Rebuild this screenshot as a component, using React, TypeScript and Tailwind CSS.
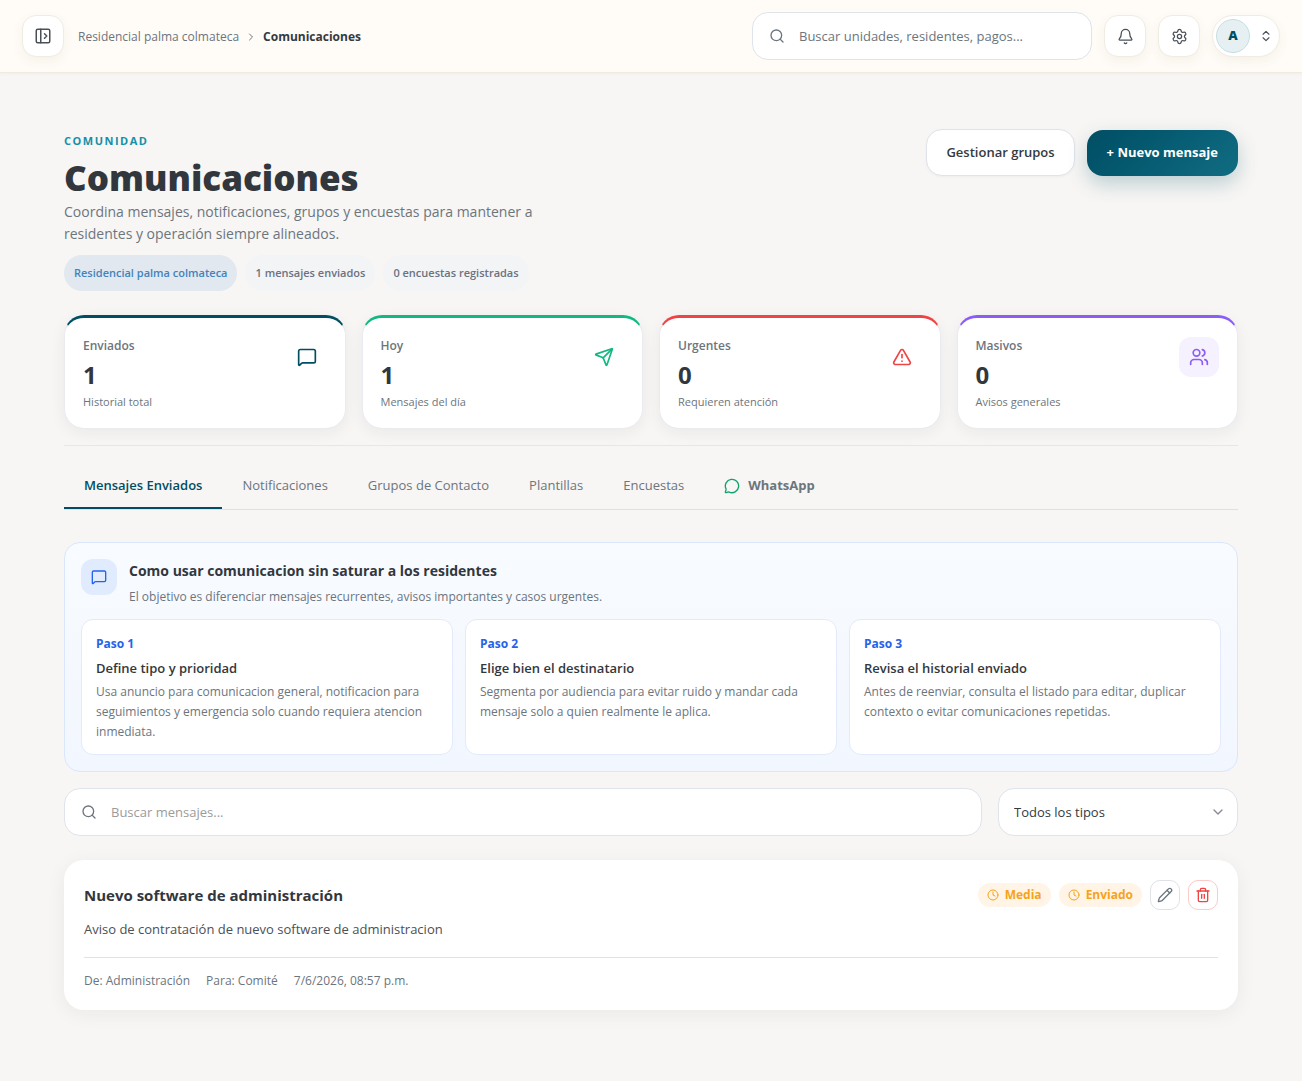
import React, { useState } from "react";
import {
	Bell,
	ChevronDown,
	ChevronRight,
	ChevronsUpDown,
	Clock,
	MessageCircle,
	MessageSquare,
	PanelLeftOpen,
	Pencil,
	Search,
	Send,
	Settings,
	Trash2,
	TriangleAlert,
	Users,
} from "lucide-react";
import cx from "clsx";

const STATS = [
	{
		label: "Enviados",
		value: 1,
		hint: "Historial total",
		icon: MessageSquare,
		border: "border-t-[#004e64]",
		iconStyle: "text-[#004e64]",
	},
	{
		label: "Hoy",
		value: 1,
		hint: "Mensajes del día",
		icon: Send,
		border: "border-t-[#10b981]",
		iconStyle: "text-[#10b981]",
	},
	{
		label: "Urgentes",
		value: 0,
		hint: "Requieren atención",
		icon: TriangleAlert,
		border: "border-t-[#ef4444]",
		iconStyle: "text-[#ef4444]",
	},
	{
		label: "Masivos",
		value: 0,
		hint: "Avisos generales",
		icon: Users,
		border: "border-t-[#8b5cf6]",
		iconStyle: "text-[#8b5cf6] bg-[#f5f1fe]",
	},
];

const TABS = ["Mensajes Enviados", "Notificaciones", "Grupos de Contacto", "Plantillas", "Encuestas"];

const STEPS = [
	{
		step: "Paso 1",
		title: "Define tipo y prioridad",
		text: "Usa anuncio para comunicacion general, notificacion para seguimientos y emergencia solo cuando requiera atencion inmediata.",
	},
	{
		step: "Paso 2",
		title: "Elige bien el destinatario",
		text: "Segmenta por audiencia para evitar ruido y mandar cada mensaje solo a quien realmente le aplica.",
	},
	{
		step: "Paso 3",
		title: "Revisa el historial enviado",
		text: "Antes de reenviar, consulta el listado para editar, duplicar contexto o evitar comunicaciones repetidas.",
	},
];

const headerButton =
	"flex items-center h-[42px] border border-[#f0ece3] bg-white text-[#495057] shadow-[0_4px_12px_rgba(80,60,20,0.06)]";
const iconButton = cx(headerButton, "justify-center w-[42px] rounded-[14px]");

const Header: React.FC = () => (
	<header className="flex items-center justify-between gap-4 h-[73px] px-[22px] bg-[#fffcf7] border-b border-[#f0ebe1] shadow-[0_1px_3px_rgba(80,60,20,0.04)]">
		<div className="flex items-center gap-3.5">
			<button type="button" aria-label="Abrir menú" className={iconButton}>
				<PanelLeftOpen size={18} />
			</button>
			<nav aria-label="Ruta" className="flex items-center gap-1.5 pt-px text-xs">
				<a href="#residencial" className="text-[#6c757d]">
					Residencial palma colmateca
				</a>
				<ChevronRight size={12} className="text-[#6c757d]" />
				<span className="font-bold text-[#343a40]">Comunicaciones</span>
			</nav>
		</div>
		<div className="flex items-center gap-3">
			<label className="flex items-center gap-3.5 w-[340px] h-12 px-4 rounded-2xl border border-[#dfe3ea] bg-white">
				<Search size={16} className="shrink-0 text-[#6c757d]" />
				<input
					type="search"
					aria-label="Buscar"
					placeholder="Buscar unidades, residentes, pagos..."
					className="w-full pt-0.5 text-[13px] outline-none placeholder:text-[#6c757d]"
				/>
			</label>
			<button type="button" aria-label="Notificaciones" className={iconButton}>
				<Bell size={17} strokeWidth={1.8} />
			</button>
			<button type="button" aria-label="Configuración" className={iconButton}>
				<Settings size={17} strokeWidth={1.8} />
			</button>
			<button
				type="button"
				aria-label="Cuenta"
				className={cx(headerButton, "justify-between w-[68px] pl-[3px] pr-1.5 rounded-full")}
			>
				<span className="flex items-center justify-center size-[34px] rounded-full border border-[#c5dfe4] bg-[#e6f0f3] text-[13px] font-extrabold text-[#004e64]">
					A
				</span>
				<ChevronsUpDown size={14} />
			</button>
		</div>
	</header>
);

const PageTitle: React.FC = () => (
	<div className="flex items-start justify-between gap-6">
		<div className="pt-1">
			<p className="text-[11px] leading-4 font-bold tracking-[1.5px] text-[#1590a8]">COMUNIDAD</p>
			<h1 className="mt-2 text-[35px] leading-[42px] font-extrabold text-[#32373d]">Comunicaciones</h1>
			<p className="mt-0.5 max-w-[480px] text-sm leading-[22px] text-[#6c757d]">
				Coordina mensajes, notificaciones, grupos y encuestas para mantener a residentes y operación siempre alineados.
			</p>
			<div className="flex gap-2 mt-2.5 text-[11px] font-semibold text-[#6b7280]">
				<span className="flex items-center h-9 px-2.5 rounded-full bg-[#e1e8f0] text-[#4383bb]">
					Residencial palma colmateca
				</span>
				<span className="flex items-center h-9 px-2.5 rounded-full bg-[#f3f4f6]">1 mensajes enviados</span>
				<span className="flex items-center h-9 px-2.5 rounded-full bg-[#f3f4f6]">0 encuestas registradas</span>
			</div>
		</div>
		<div className="flex items-end gap-3 text-[13px]">
			<button
				type="button"
				className="h-[47px] px-[19px] rounded-2xl border border-[#dfe3ea] bg-white font-semibold text-[#343a40] shadow-[0_1px_3px_rgba(0,0,0,0.04)]"
			>
				Gestionar grupos
			</button>
			<button
				type="button"
				className="h-[46px] px-5 rounded-2xl bg-linear-135 from-[#004e64] to-[#106c82] font-bold text-white shadow-[0_8px_20px_rgba(0,78,100,0.24)]"
			>
				+ Nuevo mensaje
			</button>
		</div>
	</div>
);

const Stats: React.FC = () => (
	<div className="grid grid-cols-4 gap-4 mt-6">
		{STATS.map(({ label, value, hint, icon: Icon, border, iconStyle }) => (
			<div
				key={label}
				className={cx(
					"flex items-start justify-between px-[18px] pt-[18px] pb-4",
					"rounded-[20px] border border-t-3 border-[#e9ebf0] bg-white shadow-[0_4px_16px_rgba(60,40,20,0.06)]",
					border,
				)}
			>
				<div>
					<p className="text-xs leading-5 font-semibold text-[#6c757d]">{label}</p>
					<p className="mt-1 text-2xl leading-[30px] font-bold text-[#32373d]">{value}</p>
					<p className="mt-0.5 text-[11px] leading-5 text-[#6c757d]">{hint}</p>
				</div>
				<span className={cx("flex items-center justify-center mt-px size-10 rounded-xl", iconStyle)}>
					<Icon size={20} />
				</span>
			</div>
		))}
	</div>
);

const Tabs: React.FC = () => {
	const [active, setActive] = useState(TABS[0]);

	return (
		<div role="tablist" className="flex mt-4 border-b border-[#dee0e3] text-[13px] text-[#6c757d]">
			{TABS.map((tab) => (
				<button
					key={tab}
					type="button"
					role="tab"
					aria-selected={tab === active}
					onClick={() => setActive(tab)}
					className={cx(
						"h-[47px] px-5 pt-0.5 border-b-2",
						tab === active ? "border-[#004e64] font-semibold text-[#004e64]" : "border-transparent",
					)}
				>
					{tab}
				</button>
			))}
			<button
				type="button"
				role="tab"
				aria-selected={active === "WhatsApp"}
				onClick={() => setActive("WhatsApp")}
				className="flex items-center gap-2 h-[47px] px-5 pt-0.5 border-b-2 border-transparent font-bold"
			>
				<MessageCircle size={16} className="text-[#0fa36b]" />
				WhatsApp
			</button>
		</div>
	);
};

const Guide: React.FC = () => (
	<section className="mt-8 p-4 rounded-2xl border border-[#d9e7fd] bg-linear-to-b from-[#f8fbff] to-[#f2f6fe]">
		<div className="flex gap-3">
			<span className="flex items-center justify-center size-9 rounded-xl bg-[#e0ebfe] text-[#2563eb]">
				<MessageSquare size={16} />
			</span>
			<div>
				<h2 className="text-sm leading-6 font-bold text-[#32373d]">Como usar comunicacion sin saturar a los residentes</h2>
				<p className="mt-1 text-xs leading-5 text-[#6c757d]">
					El objetivo es diferenciar mensajes recurrentes, avisos importantes y casos urgentes.
				</p>
			</div>
		</div>
		<div className="grid grid-cols-3 gap-3 mt-3">
			{STEPS.map(({ step, title, text }) => (
				<div key={step} className="px-3.5 pt-3.5 pb-3 rounded-xl border border-[#e2eafb] bg-white">
					<p className="text-xs leading-5 font-bold text-[#2563eb]">{step}</p>
					<h3 className="mt-1 text-[13px] leading-5 font-semibold text-[#32373d]">{title}</h3>
					<p className="mt-1 text-xs leading-5 text-[#6c757d]">{text}</p>
				</div>
			))}
		</div>
	</section>
);

const Filters: React.FC = () => (
	<div className="flex gap-4 mt-4 text-[13px]">
		<label className="flex flex-1 items-center gap-3.5 h-12 px-4 rounded-2xl border border-[#dfe3ea] bg-white">
			<Search size={16} className="shrink-0 text-[#6c757d]" />
			<input
				type="search"
				aria-label="Buscar mensajes"
				placeholder="Buscar mensajes..."
				className="w-full pt-0.5 outline-none placeholder:text-[#9b9b9b]"
			/>
		</label>
		<div className="relative w-60">
			<select
				aria-label="Tipo de mensaje"
				className="w-full h-12 px-[15px] pt-0.5 rounded-2xl border border-[#dfe3ea] bg-white text-[#343a40] appearance-none"
			>
				<option>Todos los tipos</option>
			</select>
			<ChevronDown size={16} className="absolute right-3 top-4 text-[#868b91] pointer-events-none" />
		</div>
	</div>
);

const Badge: React.FC<{ children: React.ReactNode }> = ({ children }) => (
	<span className="flex items-center gap-1.5 h-6 px-[9px] rounded-full bg-[#fff4e5] text-xs font-bold text-[#f5a31c]">
		<Clock size={12} />
		{children}
	</span>
);

const Message: React.FC = () => (
	<article className="mt-6 p-5 rounded-[20px] bg-white shadow-[0_4px_20px_rgba(60,40,20,0.06)]">
		<div className="flex items-center justify-between">
			<h2 className="text-[15px] font-bold text-[#32373d]">Nuevo software de administración</h2>
			<div className="flex items-center gap-2">
				<Badge>Media</Badge>
				<Badge>Enviado</Badge>
				<button
					type="button"
					aria-label="Editar"
					className="flex items-center justify-center size-[30px] rounded-[10px] border border-[#dee2e6] text-[#6c757d]"
				>
					<Pencil size={16} />
				</button>
				<button
					type="button"
					aria-label="Eliminar"
					className="flex items-center justify-center size-[30px] rounded-[10px] border border-[#fbcaca] text-[#ef4444]"
				>
					<Trash2 size={16} />
				</button>
			</div>
		</div>
		<p className="mt-2 text-[13px] leading-[23px] text-[#495057]">
			Aviso de contratación de nuevo software de administracion
		</p>
		<div className="flex gap-4 mt-4 pt-3.5 border-t border-[#dee2e6] text-xs leading-[18px] text-[#6c757d]">
			<span>De: Administración</span>
			<span>Para: Comité</span>
			<span>7/6/2026, 08:57 p.m.</span>
		</div>
	</article>
);

const App: React.FC = () => {
	return (
		<div className="min-h-screen bg-[#f7f6f4] font-['Open_Sans','Noto_Sans',sans-serif]">
			<Header />
			<main className="px-16 pt-14 pb-16">
				<PageTitle />
				<Stats />
				<hr className="mt-4 border-[#e9e6df]" />
				<Tabs />
				<Guide />
				<Filters />
				<Message />
			</main>
		</div>
	);
};

export default App;
